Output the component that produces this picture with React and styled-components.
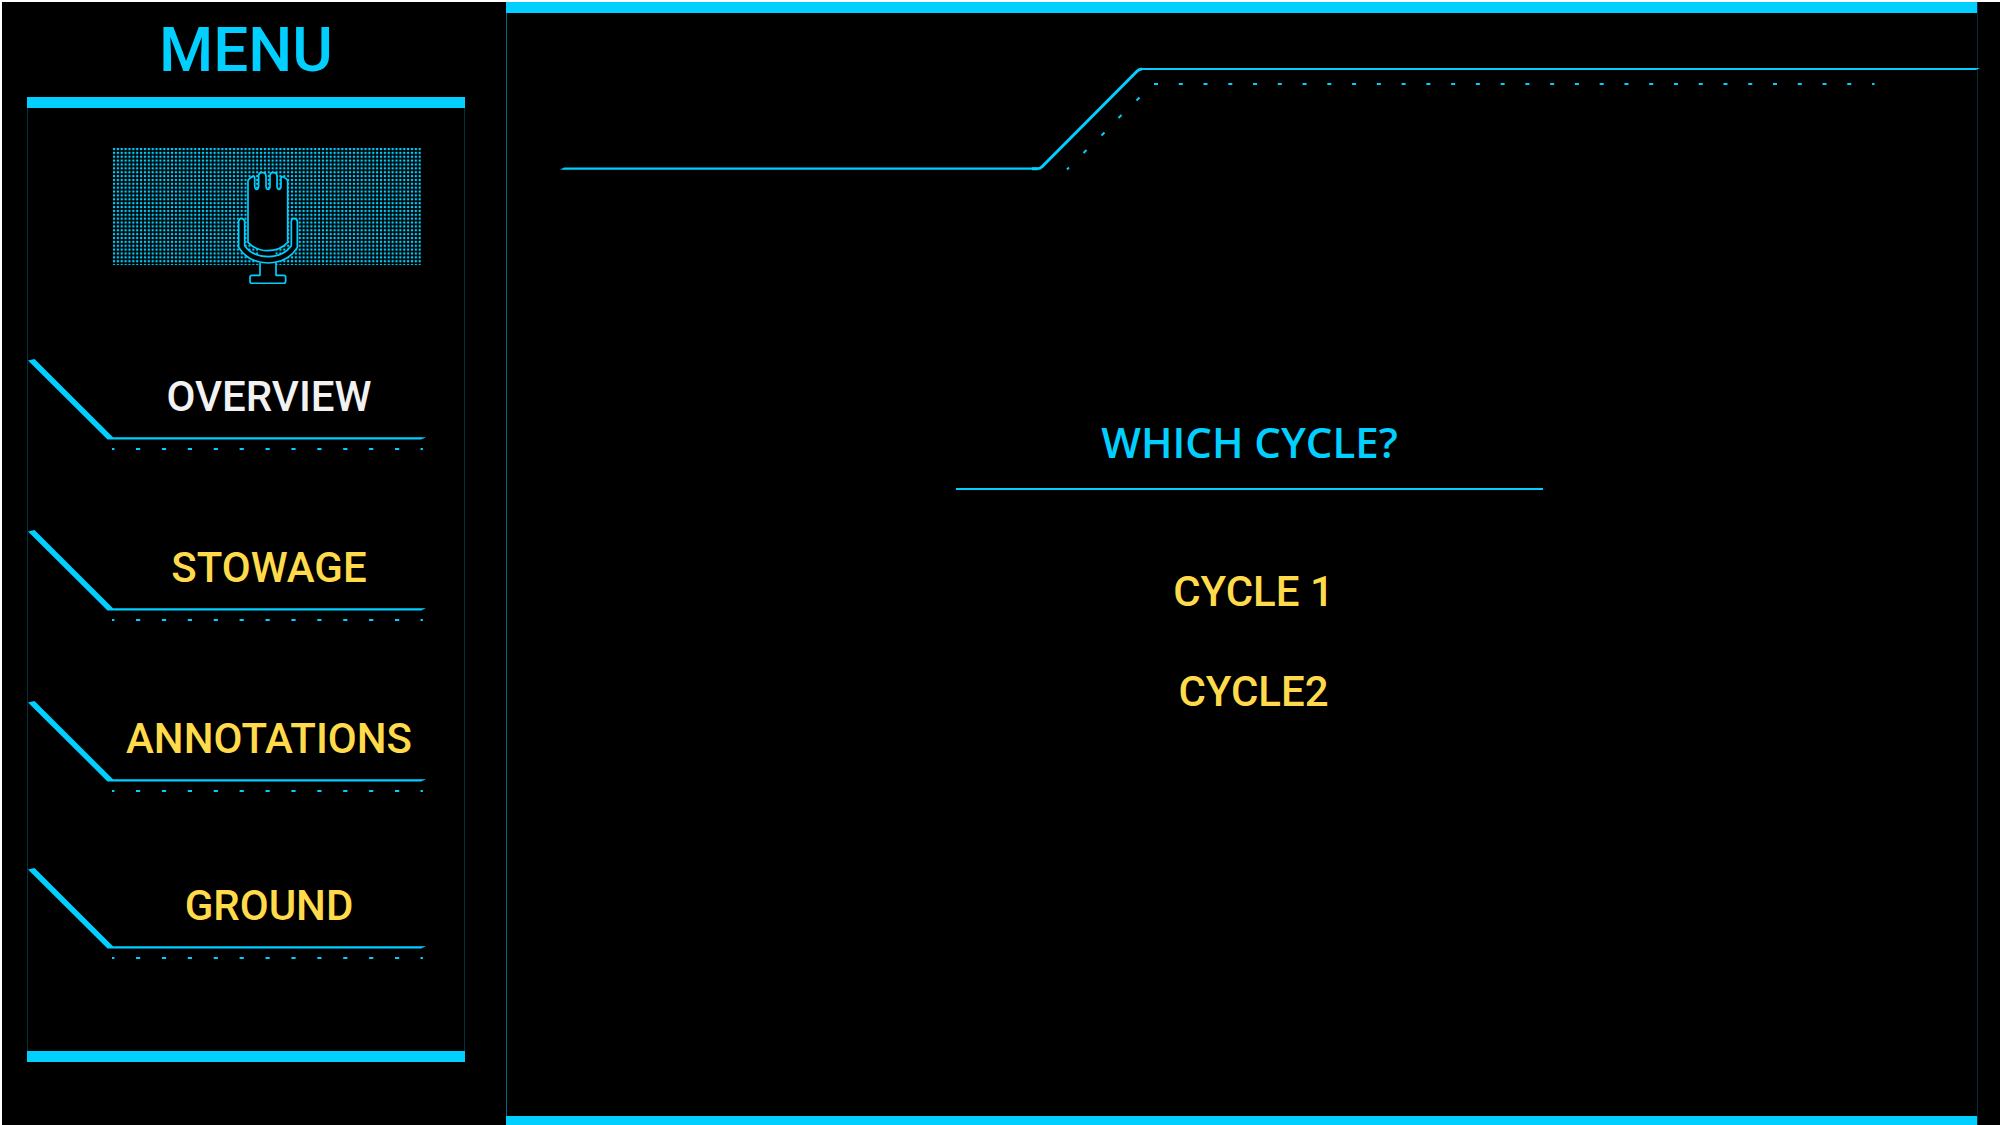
import React from "react";
import styled, { createGlobalStyle } from "styled-components";

const CYAN = "#00cfff";
const YELLOW = "#ffda4a";
const DISPLAY = 'Roboto, "Liberation Sans", sans-serif';

const GlobalStyle = createGlobalStyle`
  * { box-sizing: border-box; }
  body { margin: 0; background: #000; }
`;

const Page = styled.div`
  display: flex;
  min-height: 100vh;
  padding-right: 23px;
  border-top: 2px solid #fff;
  border-left: 2px solid #fff;
  background: #000;
  font-family: ${DISPLAY};
`;

const Sidebar = styled.aside`
  display: flex;
  flex-direction: column;
  flex: 0 0 504px;
  padding: 15px 41px 63px 25px;
`;

const MenuTitle = styled.h1`
  margin: 0 0 14px;
  font-size: 62px;
  font-weight: 500;
  line-height: 66px;
  text-align: center;
  color: ${CYAN};
`;

const MenuPanel = styled.div`
  flex: 1;
  border: solid ${CYAN};
  border-width: 11px 0;
  background:
    linear-gradient(#00323e, #00323e) left / 1px 100% no-repeat,
    linear-gradient(#00323e, #00323e) right / 1px 100% no-repeat;
`;

const MicArt = styled.svg`
  display: block;
  width: 309px;
  height: 136px;
  margin: 40px 0 75px 86px;
`;

const MenuList = styled.nav`
  display: grid;
  grid-template-rows: 171px 171px 167px 92px;
  padding-left: 1px;
`;

const MenuButton = styled.button`
  display: grid;
  align-self: start;
  width: 398px;
  height: 92px;
  padding: 0;
  border: 0;
  background: none;
  font: 500 42px/48px ${DISPLAY};
  color: ${(p) => (p.$active ? "#f2f2f2" : YELLOW)};
  cursor: pointer;
`;

const ItemFrame = styled.svg`
  grid-area: 1 / 1;
  width: 398px;
  height: 92px;
  fill: ${CYAN};
`;

const ItemLabel = styled.span`
  grid-area: 1 / 1;
  padding: 14px 0 0 84px;
  text-align: center;
`;

const Main = styled.main`
  display: flex;
  flex-direction: column;
  flex: 1;
  min-width: 0;
  border: solid ${CYAN};
  border-width: 11px 0 9px;
  background: linear-gradient(#006a80, #006a80) left / 1px 100% no-repeat;
  box-shadow: 1px 0 0 #002f3a;
`;

const HeaderLine = styled.svg`
  display: block;
  width: calc(100% - 54px);
  margin: 51px 0 0 54px;
  overflow: visible;
`;

const Prompt = styled.section`
  display: flex;
  flex-direction: column;
  align-items: center;
  padding: 244px 0 0 16px;
`;

const PromptTitle = styled.h2`
  width: 587px;
  max-width: 100%;
  margin: 0;
  padding-bottom: 22px;
  border-bottom: 2px solid ${CYAN};
  font: 600 42px/48px "Open Sans", "Noto Sans", sans-serif;
  text-align: center;
  color: ${CYAN};
`;

const Options = styled.div`
  display: grid;
  gap: 52px;
  padding: 78px 0 0 8px;
`;

const OptionButton = styled.button`
  padding: 0;
  border: 0;
  background: none;
  font: 500 42px/48px ${DISPLAY};
  color: ${YELLOW};
  cursor: pointer;
`;

const items = ["OVERVIEW", "STOWAGE", "ANNOTATIONS", "GROUND"];
const cycles = ["CYCLE 1", "CYCLE2"];

function Microphone() {
  return (
    <MicArt viewBox="0 0 309 136" aria-hidden="true">
      <defs>
        <pattern id="dots" width="3.87" height="3.87" patternUnits="userSpaceOnUse">
          <rect width="2" height="2" fill={CYAN} />
          <rect width="3.87" height="0.8" y="0.6" fill={CYAN} opacity="0.3" />
          <rect width="0.8" height="3.87" x="0.6" fill={CYAN} opacity="0.3" />
        </pattern>
      </defs>
      <rect width="308" height="117" fill="url(#dots)" />
      <g transform="translate(107 12) scale(0.33333)" stroke={CYAN} strokeWidth="5" strokeLinejoin="round" fill="#000">
        <rect x="114" y="268" width="52" height="26" stroke="none" />
        <path d="M120 308V346H96Q90 346 90 352V364Q90 370 95 370H192Q197 370 197 364V352Q197 346 191 346H168V308" />
        <path d="M56 184Q58 175 64 175Q73 176 74 184V257Q98 290 145 290Q190 290 214 257V184Q215 175 222 175Q231 176 232 184V262Q204 308 145 309Q84 308 56 262Z" />
        <path d="M84 62Q90 51 100 49Q104 48 104 56V80Q105 88 110 88Q115 88 116 80V46Q117 38 125 38H130Q137 38 138 48V80Q139 88 144 88Q149 88 150 80V46Q151 38 158 38H163Q170 38 171 48V80Q172 88 177 88Q182 88 183 80V54Q184 48 190 51Q198 54 203 62V247Q180 272 143 272Q108 272 84 247Z" />
      </g>
    </MicArt>
  );
}

function MenuItem({ label, active }) {
  return (
    <MenuButton type="button" $active={active}>
      <ItemFrame viewBox="0 0 398 92" aria-hidden="true">
        <path d="M0 1.5L6.5 0L85 78.3H398L393 80.4H79.5Z" />
        <rect x="84" y="89" width="2.4" height="2" />
        {Array.from({ length: 11 }, (_, i) => (
          <rect key={i} x={108 + i * 25.9} y="89" width="4.2" height="2" />
        ))}
        <rect x="392.5" y="89" width="2.4" height="2" />
      </ItemFrame>
      <ItemLabel>{label}</ItemLabel>
    </MenuButton>
  );
}

function HeaderTrace() {
  return (
    <HeaderLine viewBox="0 0 1417 110" aria-hidden="true" fill="none" stroke={CYAN}>
      <path d="M0 105.7L4 103.6H477V105.7Z" fill={CYAN} stroke="none" />
      <path d="M472 104.8H477Q480 104.8 482 102.8L577 7.2Q579 5 582 5" strokeWidth="3" />
      <path d="M580 4H1420L1416 6H580Z" fill={CYAN} stroke="none" />
      {Array.from({ length: 30 }, (_, i) => (
        <rect key={i} x={594 + i * 24.76} y="19" width={i === 29 ? 2.5 : 4} height="2" fill={CYAN} stroke="none" />
      ))}
      <path strokeWidth="2" d="M576.5 36.5l3-3M558.5 54l3-3M541.5 71.5l3-3M523.5 89l3-3M507 105.5l2-2" />
    </HeaderLine>
  );
}

export default function App() {
  return (
    <>
      <GlobalStyle />
      <Page>
        <Sidebar>
          <MenuTitle>MENU</MenuTitle>
          <MenuPanel>
            <Microphone />
            <MenuList>
              {items.map((label, i) => (
                <MenuItem key={label} label={label} active={i === 0} />
              ))}
            </MenuList>
          </MenuPanel>
        </Sidebar>
        <Main>
          <HeaderTrace />
          <Prompt>
            <PromptTitle>WHICH CYCLE?</PromptTitle>
            <Options>
              {cycles.map((label) => (
                <OptionButton key={label} type="button">{label}</OptionButton>
              ))}
            </Options>
          </Prompt>
        </Main>
      </Page>
    </>
  );
}
